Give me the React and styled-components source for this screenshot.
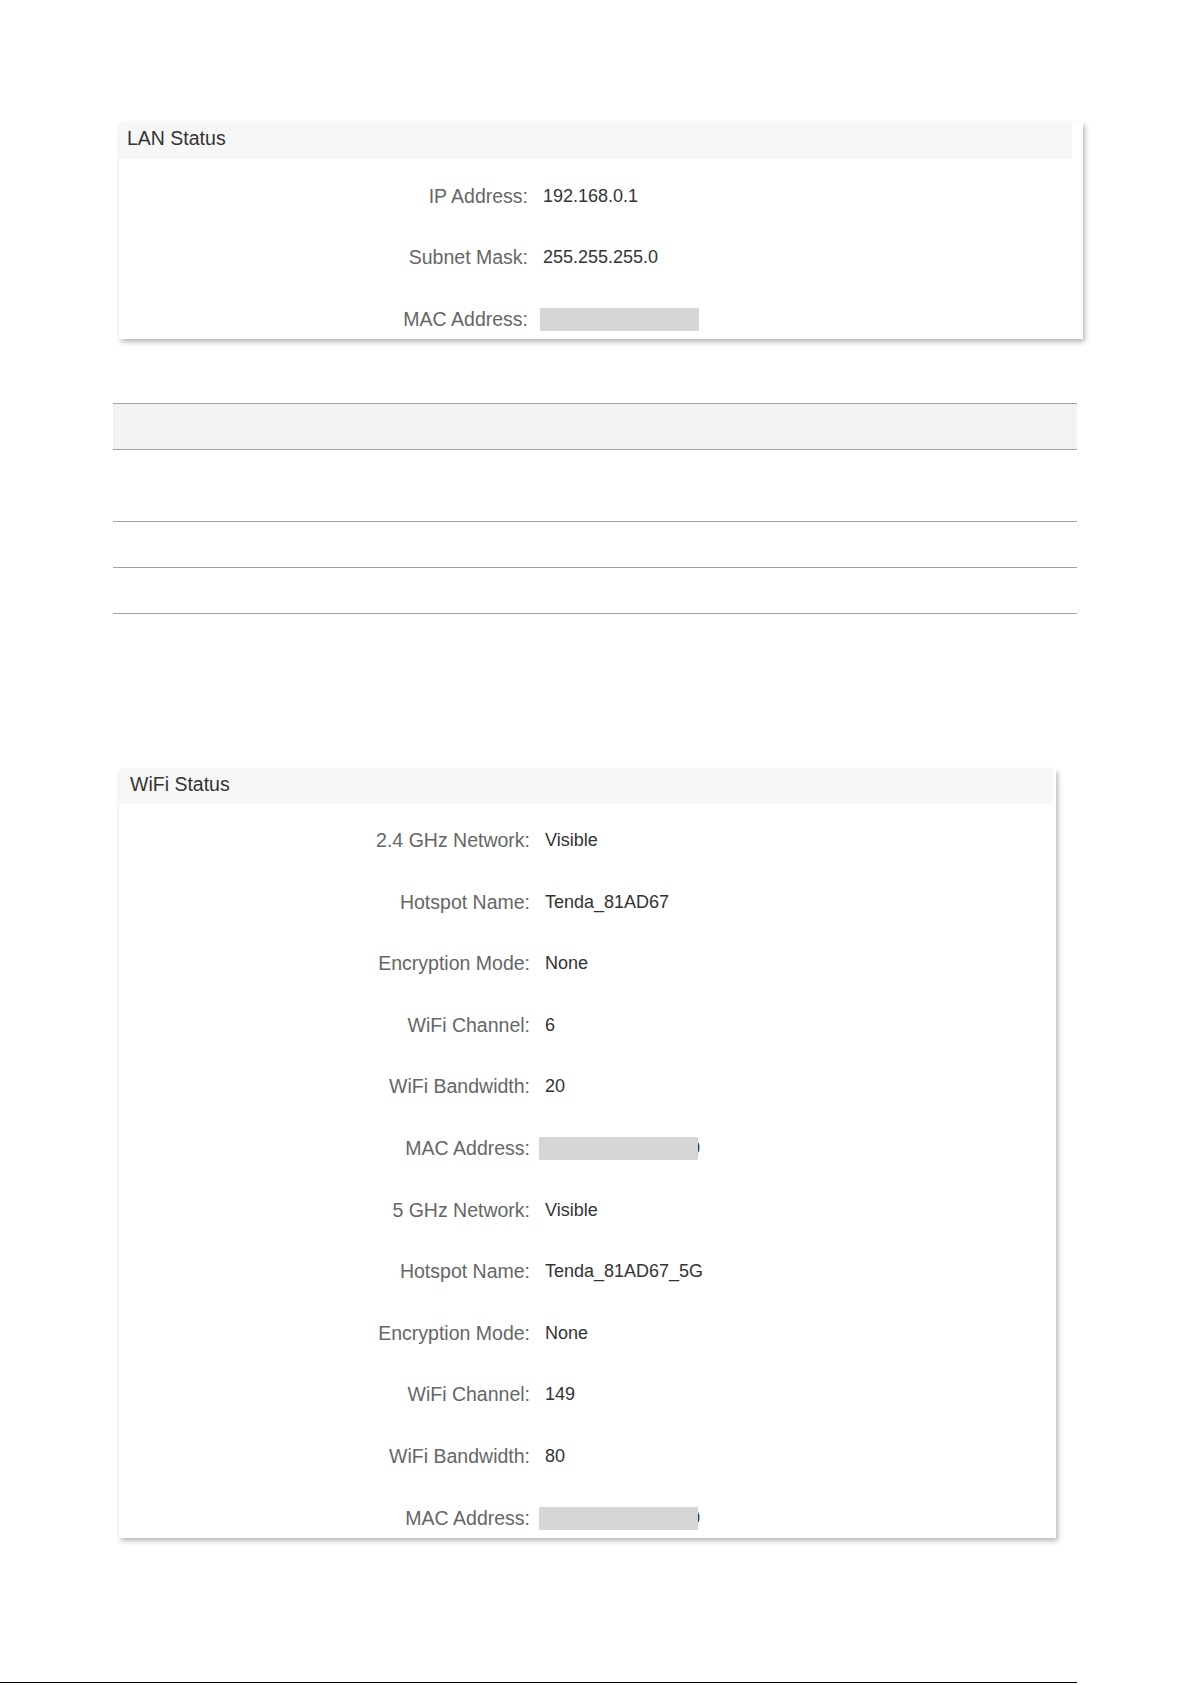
import React from "react";
import styled, { createGlobalStyle } from "styled-components";

const Global = createGlobalStyle`
  html, body {
    margin: 0;
    padding: 0;
    background: #ffffff;
  }
  body {
    font-family: "Liberation Sans", Arial, sans-serif;
  }
`;

const Page = styled.div`
  width: 1192px;
  min-height: 1685px;
  box-sizing: border-box;
  padding-top: 122px;
  display: flex;
  flex-direction: column;
  align-items: flex-start;
  overflow: hidden;
`;

const Card = styled.section`
  margin-left: 119px;
  margin-top: ${(p) => p.$top || 0}px;
  width: ${(p) => p.$width}px;
  background: #ffffff;
  box-shadow: 2px 3px 5px rgba(0, 0, 0, 0.28);
  display: flex;
  flex-direction: column;
`;

const CardHeader = styled.header`
  height: ${(p) => p.$height}px;
  margin-right: ${(p) => p.$gap}px;
  padding-left: ${(p) => p.$indent}px;
  padding-bottom: 5px;
  box-sizing: border-box;
  background: #f7f7f7;
  display: flex;
  align-items: center;
  font-size: 19.5px;
  color: #333333;
`;

const Rows = styled.div`
  display: flex;
  flex-direction: column;
  gap: ${(p) => p.$gap}px;
  padding-top: ${(p) => p.$padTop}px;
`;

const Row = styled.div`
  height: 40px;
  display: grid;
  grid-template-columns: ${(p) => p.$labelWidth}px 1fr;
  column-gap: 15px;
  align-items: center;
`;

const Label = styled.span`
  text-align: right;
  font-size: 19.5px;
  color: #666666;
  white-space: nowrap;
`;

const Value = styled.span`
  font-size: 18px;
  color: #333333;
  white-space: nowrap;
`;

const MacValue = styled.span`
  position: relative;
  justify-self: start;
  font-size: 18px;
  color: #333333;
  white-space: nowrap;
`;

/* grey bar laid over the MAC address */
const Redact = styled.span`
  position: absolute;
  left: ${(p) => p.$shift}px;
  top: 50%;
  width: 159px;
  height: 23px;
  transform: translateY(-48%);
  background: #d6d6d6;
`;

const Table = styled.div`
  margin-top: 64px;
  margin-left: 113px;
  width: 964px;
  border-top: 1px solid #a3a3a3;
  display: flex;
  flex-direction: column;
`;

const TableRow = styled.div`
  height: ${(p) => p.$height}px;
  background: ${(p) => (p.$head ? "#f2f2f2" : "#ffffff")};
  border-bottom: 1px solid #a3a3a3;
`;

const FooterRule = styled.div`
  margin-top: 144px;
  width: 1077px;
  height: 1px;
  background: #000000;
`;

const lanRows = [
  ["IP Address:", "192.168.0.1"],
  ["Subnet Mask:", "255.255.255.0"],
  ["MAC Address:", "C8:3A:35:81:AD:6"],
];

const wifiRows = [
  ["2.4 GHz Network:", "Visible"],
  ["Hotspot Name:", "Tenda_81AD67"],
  ["Encryption Mode:", "None"],
  ["WiFi Channel:", "6"],
  ["WiFi Bandwidth:", "20"],
  ["MAC Address:", "C8:3A:35:81:AD:60"],
  ["5 GHz Network:", "Visible"],
  ["Hotspot Name:", "Tenda_81AD67_5G"],
  ["Encryption Mode:", "None"],
  ["WiFi Channel:", "149"],
  ["WiFi Bandwidth:", "80"],
  ["MAC Address:", "C8:3A:35:81:AD:60"],
];

function StatusRow({ label, value, labelWidth, shift }) {
  const mac = label === "MAC Address:";
  return (
    <Row $labelWidth={labelWidth}>
      <Label>{label}</Label>
      {mac ? (
        <MacValue>
          {value}
          <Redact $shift={shift} />
        </MacValue>
      ) : (
        <Value>{value}</Value>
      )}
    </Row>
  );
}

export default function App() {
  return (
    <>
      <Global />
      <Page>
        <Card $width={964}>
          <CardHeader $height={37} $gap={11} $indent={8}>
            LAN Status
          </CardHeader>
          <Rows $gap={21.5} $padTop={17}>
            {lanRows.map(([label, value]) => (
              <StatusRow key={label} label={label} value={value} labelWidth={409} shift={-3} />
            ))}
          </Rows>
        </Card>

        <Table>
          <TableRow $head $height={45} />
          <TableRow $height={71} />
          <TableRow $height={45} />
          <TableRow $height={45} />
        </Table>

        <Card $width={937} $top={155}>
          <CardHeader $height={35} $gap={3} $indent={11}>
            WiFi Status
          </CardHeader>
          <Rows $gap={21.6} $padTop={16.5}>
            {wifiRows.map(([label, value], i) => (
              <StatusRow key={i} label={label} value={value} labelWidth={411} shift={-6} />
            ))}
          </Rows>
        </Card>

        <FooterRule />
      </Page>
    </>
  );
}
